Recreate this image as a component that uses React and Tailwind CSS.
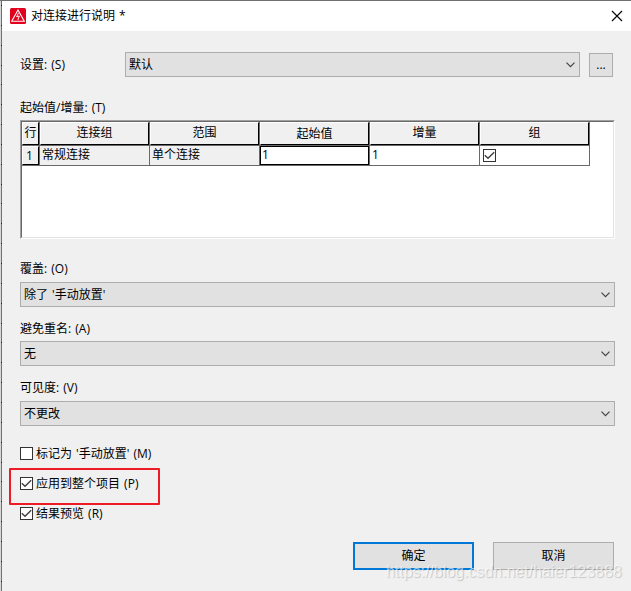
import { useState } from "react";

//////////////////////////////////////////////
function Tick() {
  return (
    <svg width="11" height="11" viewBox="0 0 11 11" fill="none" stroke="#404040" strokeWidth="1.4">
      <path d="M0.8 5.3 L4 8.3 L10.2 2.2" />
    </svg>
  );
}
//////////////////////////////////////////////

//////////////////////////////////////////////
function CheckBox(props) {
  return (
    <span className="block h-[13px] w-[13px] shrink-0 border border-[#333333] bg-white">
      {props.checked && <Tick />}
    </span>
  );
}
//////////////////////////////////////////////

//////////////////////////////////////////////
function CheckRow(props) {
  const [checked, setChecked] = useState(props.checked);
  return (
    <div onClick={() => setChecked(!checked)} className="flex h-[30px] items-center gap-[3px]">
      <CheckBox checked={checked} />
      <span className="pt-0.5">{props.label}</span>
    </div>
  );
}
//////////////////////////////////////////////

//////////////////////////////////////////////
function Select(props) {
  return (
    <div className={"flex h-[25px] items-center justify-between border border-[#adadad] bg-[#e1e1e1] pr-1 pl-[3px] " + props.className}>
      <span>{props.value}</span>
      <svg width="9" height="6" viewBox="0 0 9 6" fill="none" stroke="#444444" strokeWidth="1.2">
        <path d="M0.5 0.7 L4.5 4.7 L8.5 0.7" />
      </svg>
    </div>
  );
}
//////////////////////////////////////////////

//////////////////////////////////////////////
function Field(props) {
  return (
    <div className={props.className}>
      <div className="h-[18px] leading-[18px]">{props.label}</div>
      <Select value={props.value} className={"w-[595px] " + (props.tight ? "mt-[3px]" : "mt-1")} />
    </div>
  );
}
//////////////////////////////////////////////

//////////////////////////////////////////////
function HeadCell(props) {
  return (
    <div className="h-6 w-[110px] border-r border-b border-[#696969]">
      <div className={"flex h-[23px] items-center justify-center border border-t-white border-r-black border-b-black border-l-white " + (props.active ? "" : "pb-0.5")}>
        {props.children}
      </div>
    </div>
  );
}
//////////////////////////////////////////////

//////////////////////////////////////////////
function Cell(props) {
  return (
    <div className={"h-5 w-[110px] border-r border-b border-[#696969] leading-[18px] " + props.className}>
      {props.children}
    </div>
  );
}
//////////////////////////////////////////////

//////////////////////////////////////////////
function Grid() {
  const heads = ["连接组", "范围", "起始值", "增量", "组"];
  return (
    <div className="h-[119px] w-[595px] border border-t-[#a0a0a0] border-r-white border-b-white border-l-[#a0a0a0]">
      <div className="h-[117px] border border-t-[#696969] border-r-[#e3e3e3] border-b-[#e3e3e3] border-l-[#696969] bg-white">
        <div className="flex w-[568px] bg-[#f0f0f0]">
          <div className="h-6 w-[18px] border-r border-b border-[#696969]">
            <div className="flex h-[23px] items-center justify-center border border-t-white border-r-black border-b-black border-l-white pb-0.5">行</div>
          </div>
          {heads.map((it) => (
            <HeadCell key={it} active={it == "起始值"}>{it}</HeadCell>
          ))}
        </div>
        <div className="flex w-[568px]">
          <div className="h-5 w-[18px] border-r border-b border-[#696969] bg-[#f0f0f0]">
            <div className="flex h-[19px] items-center justify-center border border-t-white border-r-black border-b-black border-l-white pr-0.5">1</div>
          </div>
          <Cell className="bg-[#f0f0f0] pl-0.5">常规连接</Cell>
          <Cell className="bg-[#f0f0f0] pl-0.5">单个连接</Cell>
          <Cell className="">
            <div className="h-[19px] border border-black pl-px leading-4">1</div>
          </Cell>
          <Cell className="pl-0.5">1</Cell>
          <Cell className="pt-[3px] pl-[3px]">
            <CheckBox checked />
          </Cell>
        </div>
      </div>
    </div>
  );
}
//////////////////////////////////////////////

//////////////////////////////////////////////
function TitleBar() {
  return (
    <div className="flex h-[30px] items-center bg-white pl-2">
      <svg width="16" height="16" viewBox="0 0 16 16" fill="none">
        <rect width="16" height="16" rx="1.5" fill="#e2001f" />
        <path d="M8 2 L14.3 13.2 H1.7 Z" stroke="#ffffff" strokeWidth="1.1" />
        <path d="M8.6 4.8 L6.6 8.8 L9.4 8 L7.8 12" stroke="#ffffff" strokeWidth="0.9" />
      </svg>
      <span className="ml-[5px]">对连接进行说明 *</span>
      <svg className="mr-2 ml-auto" width="12" height="12" viewBox="0 0 12 12" stroke="#000000" strokeWidth="1.1">
        <path d="M1 1 L11 11 M11 1 L1 11" />
      </svg>
    </div>
  );
}
//////////////////////////////////////////////

export default function App() {
  return (
    <div className="relative h-[591px] w-[631px] overflow-hidden border-t border-[#707070] bg-[#f0f0f0] font-['Open_Sans','Noto_Sans_CJK_SC',sans-serif] text-[12px] leading-[18px] [word-spacing:1px] text-black">
      <div className="flex h-[590px]">
        {/* window edge with the ruler dots behind it */}
        <div className="flex w-0.5 shrink-0">
          <div className="w-px bg-[#d8d8d8]"></div>
          <div className="w-px bg-[#707070] bg-[repeating-linear-gradient(to_bottom,transparent_0px,transparent_4px,#1c1c1c_4px,#1c1c1c_5px,transparent_5px,transparent_19.85px)]"></div>
        </div>
        <div className="flex-1">
          <TitleBar />
          <div className="pl-[18px]">
            <div className="flex pt-[21px]">
              <div className="w-[105px] pt-1">设置: (S)</div>
              <Select value="默认" className="w-[455px]" />
              <button className="mt-px ml-[9px] h-6 w-6 border border-[#adadad] bg-[#e1e1e1] leading-5">...</button>
            </div>
            <div className="mt-[22px] mb-[3px] h-[18px]">起始值/增量: (T)</div>
            <Grid />
            <Field label="覆盖: (O)" value="除了 '手动放置'" className="mt-[21px]" />
            <Field label="避免重名: (A)" value="无" className="mt-[13px]" tight />
            <Field label="可见度: (V)" value="不更改" className="mt-[13px]" />
            <div className="mt-3">
              <CheckRow label="标记为 '手动放置' (M)" />
              <CheckRow label="应用到整个项目 (P)" checked />
              <CheckRow label="结果预览 (R)" checked />
            </div>
            <div className="mt-3.5 flex gap-[19px] pl-[333px]">
              <button className="h-7 w-[121px] border-2 border-[#0078d7] bg-[#e1e1e1]">确定</button>
              <button className="h-7 w-[121px] border border-[#adadad] bg-[#e1e1e1]">取消</button>
            </div>
          </div>
        </div>
      </div>
      {/* marker around the project-wide option */}
      <div className="absolute top-[467px] left-[9px] h-[37px] w-[151px] rounded-[1px] border-2 border-[#ed1c24]"></div>
      <div className="absolute top-[562px] left-[386px] font-['Liberation_Sans',sans-serif] text-[16px] tracking-[-0.03px] whitespace-nowrap text-white/60 [text-shadow:1px_1px_1px_rgba(0,0,0,0.18)]">
        https://blog.csdn.net/haier123888
      </div>
    </div>
  );
}
